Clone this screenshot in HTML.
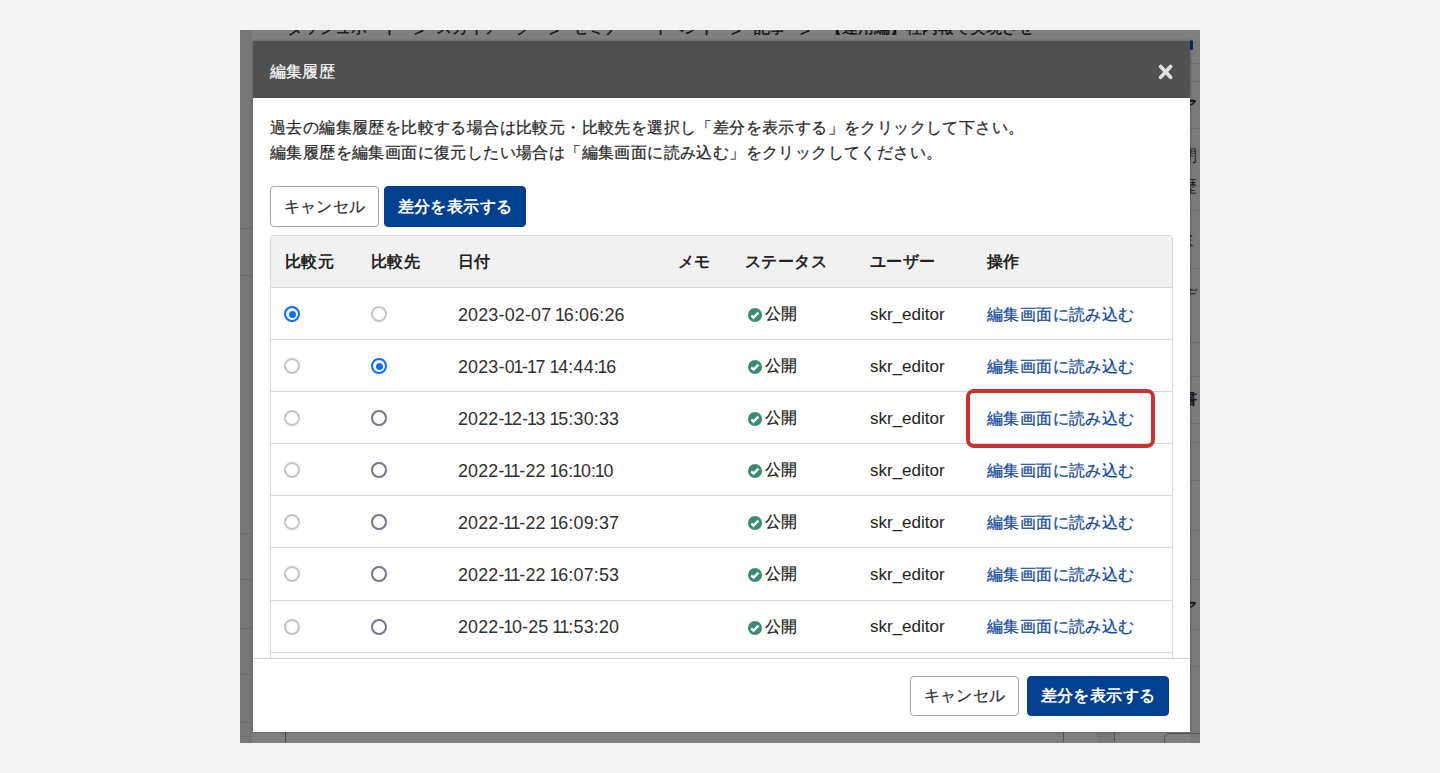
<!DOCTYPE html>
<html lang="ja">
<head>
<meta charset="utf-8">
<style>
*{box-sizing:border-box;margin:0;padding:0}
html,body{width:1440px;height:773px;overflow:hidden;background:#f3f3f3;font-family:"Liberation Sans",sans-serif;color:#333}
#screen{position:absolute;left:240px;top:30px;width:960px;height:713px;overflow:hidden;background:#7f7f7f}
#bgpage{position:absolute;left:0;top:0;width:960px;height:712px}
.crumb{position:absolute;top:-12px;font-size:16px;color:#111;white-space:nowrap;-webkit-text-stroke:0.3px #111}
#modal{position:absolute;left:13px;top:11px;width:937px;height:691px;background:#fff;box-shadow:0 0 3px rgba(0,0,0,.35)}
#mhead{position:absolute;left:0;top:0;width:937px;height:57px;background:#505050;color:#fff}
#mhead .title{position:absolute;left:17px;top:20px;font-size:16.4px;line-height:20px;letter-spacing:0.2px;-webkit-text-stroke:0.2px #fff}
#mhead svg{position:absolute;left:905px;top:23px}
.intro{position:absolute;left:17px;top:75px;font-size:16px;line-height:24.5px;color:#2a2a2a;letter-spacing:0.4px;white-space:nowrap;-webkit-text-stroke:0.25px #2a2a2a}
.btn{position:absolute;height:41px;border-radius:4px;font-size:16px;line-height:39px;text-align:center;letter-spacing:0.4px;white-space:nowrap}
.btn.c{background:#fff;border:1px solid #a3a3a3;color:#333;-webkit-text-stroke:0.25px #333}
.btn.p{background:#00408f;border:1px solid #00408f;color:#fff;font-weight:bold}
#tablewrap{position:absolute;left:17px;top:194px;width:903px;height:423px;overflow:hidden}
#table{position:absolute;left:0;top:0;width:903px;border:1px solid #d6d6d6;border-radius:3px;background:#fff}
.row{position:relative;height:52.1px;border-top:1px solid #d6d6d6}
.row.h{background:#f1f1f1;height:51px;border-top:none;border-radius:3px 3px 0 0}
.row.h2{border-top:1px solid #cfcfcf}
.cell{position:absolute;top:0;height:51px;line-height:51px;font-size:16px;white-space:nowrap}
.h .cell{font-weight:bold;color:#222;letter-spacing:0.4px;line-height:51px}
.radio{position:absolute;top:18px;width:16px;height:16px;border-radius:50%;border:2px solid #c4c4ca}
.radio.dk{border-color:#75758a}
.radio.on{border-color:#0a6dff}
.radio.on::after{content:"";position:absolute;left:2.5px;top:2.5px;width:7px;height:7px;border-radius:50%;background:#0a6dff}
.date{font-size:17.85px;color:#303030;top:1.5px;letter-spacing:0.2px}
.o{margin-left:-1.4px;margin-right:-1.4px}
.user{font-size:17px;color:#222;top:0.5px}
.stat{color:#222;letter-spacing:0.4px;-webkit-text-stroke:0.25px #222}
.link{color:#134a98;letter-spacing:0.4px;-webkit-text-stroke:0.25px #134a98;top:0.5px}
.chk{position:absolute;left:0;top:20px}
#foot{position:absolute;left:0;top:617px;width:937px;height:74px;border-top:1px solid #cfcfcf;background:#fff}
#redbox{position:absolute;left:713px;top:348px;width:189px;height:59px;border:4px solid #c93232;border-radius:8px}
</style>
</head>
<body>
<div id="screen">
  <div id="bgpage">
    <div style="position:absolute;left:0;top:0;width:12px;height:713px;background:#777"></div><div style="position:absolute;left:950px;top:11px;width:10px;height:702px;background:#7a7a7a"></div>
    <div class="crumb" style="left:47px">ダッシュボード</div><div class="crumb" style="left:174px;top:-9px;font-size:17px">&gt;</div><div class="crumb" style="left:196px">スカイアーク</div><div class="crumb" style="left:309px;top:-9px;font-size:17px">&gt;</div><div class="crumb" style="left:332px">セミナー・イベント</div><div class="crumb" style="left:491px;top:-9px;font-size:17px">&gt;</div><div class="crumb" style="left:514px">記事</div><div class="crumb" style="left:560px;top:-9px;font-size:17px">&gt;</div><div class="crumb" style="left:586px">【運用編】社内報で実現させ</div>
    <div style="position:absolute;left:0;top:198px;width:12px;height:1px;background:#6c6c6c"></div>
<div style="position:absolute;left:0;top:245px;width:12px;height:1px;background:#6c6c6c"></div>
<div style="position:absolute;left:0;top:503px;width:12px;height:1px;background:#6c6c6c"></div>
<div style="position:absolute;left:0;top:549px;width:12px;height:1px;background:#6c6c6c"></div>
<div style="position:absolute;left:0;top:598px;width:12px;height:1px;background:#6c6c6c"></div>
<div style="position:absolute;left:0;top:644px;width:12px;height:1px;background:#6c6c6c"></div>
<div style="position:absolute;left:0;top:692px;width:12px;height:1px;background:#6c6c6c"></div>
<div style="position:absolute;left:950px;top:33px;width:10px;height:1px;background:#6c6c6c"></div>
<div style="position:absolute;left:950px;top:51px;width:10px;height:1px;background:#6c6c6c"></div>
<div style="position:absolute;left:950px;top:98px;width:10px;height:1px;background:#6c6c6c"></div>
<div style="position:absolute;left:950px;top:180px;width:10px;height:1px;background:#6c6c6c"></div>
<div style="position:absolute;left:950px;top:238px;width:10px;height:1px;background:#6c6c6c"></div>
<div style="position:absolute;left:950px;top:312px;width:10px;height:1px;background:#6c6c6c"></div>
<div style="position:absolute;left:950px;top:346px;width:10px;height:1px;background:#6c6c6c"></div>
<div style="position:absolute;left:950px;top:393px;width:10px;height:1px;background:#6c6c6c"></div>
<div style="position:absolute;left:950px;top:412px;width:10px;height:1px;background:#6c6c6c"></div>
<div style="position:absolute;left:950px;top:450px;width:10px;height:1px;background:#6c6c6c"></div>
<div style="position:absolute;left:950px;top:500px;width:10px;height:1px;background:#6c6c6c"></div>
<div style="position:absolute;left:950px;top:549px;width:10px;height:1px;background:#6c6c6c"></div>
<div style="position:absolute;left:950px;top:599px;width:10px;height:1px;background:#6c6c6c"></div>
<div style="position:absolute;left:950px;top:636px;width:10px;height:1px;background:#6c6c6c"></div>
<div style="position:absolute;left:857px;top:701px;width:17px;height:11px;background:#797979"></div>
<div style="position:absolute;left:823px;top:701px;width:1px;height:11px;background:#555"></div>
<div style="position:absolute;left:874px;top:701px;width:1px;height:11px;background:#555"></div>
<div style="position:absolute;left:924px;top:703px;width:60px;height:30px;border:1px solid #555;border-radius:5px"></div>
<div style="position:absolute;left:45px;top:701px;width:1px;height:11px;background:#4a4a4a"></div>
<div style="position:absolute;left:950px;top:10px;width:3px;height:10px;border-radius:1.5px;background:#05285c"></div>
<div style="position:absolute;left:941px;top:66px;font-size:16px;line-height:20px;font-weight:bold;color:#1a1a1a">ア</div>
<div style="position:absolute;left:941px;top:116px;font-size:16px;line-height:20px;font-weight:normal;color:#1a1a1a">閉</div>
<div style="position:absolute;left:941px;top:147px;font-size:16px;line-height:20px;font-weight:normal;color:#1a1a1a">歴</div>
<div style="position:absolute;left:941px;top:200px;font-size:16px;line-height:20px;font-weight:normal;color:#1a1a1a">ミ</div>
<div style="position:absolute;left:941px;top:255px;font-size:16px;line-height:20px;font-weight:normal;color:#1a1a1a">デ</div>
<div style="position:absolute;left:941px;top:359px;font-size:16px;line-height:20px;font-weight:bold;color:#1a1a1a">書</div>
<div style="position:absolute;left:941px;top:568px;font-size:16px;line-height:20px;font-weight:bold;color:#1a1a1a">ア</div>
  </div>
  <div id="modal">
    <div id="mhead">
      <div class="title">編集履歴</div>
      <svg width="16" height="17" viewBox="0 0 16 17"><path d="M2.7 2.5 L12.6 13.3 M12.6 2.5 L2.7 13.3" stroke="#e0e0e0" stroke-width="3.7" stroke-linecap="round"/></svg>
    </div>
    <div class="intro">過去の編集履歴を比較する場合は比較元・比較先を選択し「差分を表示する」をクリックして下さい。<br>編集履歴を編集画面に復元したい場合は「編集画面に読み込む」をクリックしてください。</div>
    <div class="btn c" style="left:17px;top:145px;width:109px">キャンセル</div>
    <div class="btn p" style="left:131px;top:145px;width:142px">差分を表示する</div>
    <div id="tablewrap">
      <div id="table">
        <div class="row h">
          <div class="cell" style="left:14px">比較元</div>
          <div class="cell" style="left:100px">比較先</div>
          <div class="cell" style="left:187px">日付</div>
          <div class="cell" style="left:407px">メモ</div>
          <div class="cell" style="left:474px">ステータス</div>
          <div class="cell" style="left:599px">ユーザー</div>
          <div class="cell" style="left:716px">操作</div>
        </div>
        <div class="row">
<div class="radio on" style="left:13px"></div>
<div class="radio lt" style="left:100px"></div>
<div class="cell date" style="left:187px">2023-02-07 <span class="o">1</span>6:06:26</div>
<div class="cell stat" style="left:477px"><svg class="chk" width="14" height="14" viewBox="0 0 14 14"><circle cx="7" cy="7" r="7" fill="#3a8a76"/><path d="M3.2 7.5 L5.6 9.6 L10.5 4.6" fill="none" stroke="#fff" stroke-width="2.4" stroke-linecap="butt" stroke-linejoin="miter"/></svg><span style="margin-left:17px">公開</span></div>
<div class="cell user" style="left:599px">skr_editor</div>
<div class="cell link" style="left:716px">編集画面に読み込む</div>
</div>
<div class="row">
<div class="radio lt" style="left:13px"></div>
<div class="radio on" style="left:100px"></div>
<div class="cell date" style="left:187px">2023-0<span class="o">1</span>-<span class="o">1</span>7 <span class="o">1</span>4:44:<span class="o">1</span>6</div>
<div class="cell stat" style="left:477px"><svg class="chk" width="14" height="14" viewBox="0 0 14 14"><circle cx="7" cy="7" r="7" fill="#3a8a76"/><path d="M3.2 7.5 L5.6 9.6 L10.5 4.6" fill="none" stroke="#fff" stroke-width="2.4" stroke-linecap="butt" stroke-linejoin="miter"/></svg><span style="margin-left:17px">公開</span></div>
<div class="cell user" style="left:599px">skr_editor</div>
<div class="cell link" style="left:716px">編集画面に読み込む</div>
</div>
<div class="row">
<div class="radio lt" style="left:13px"></div>
<div class="radio dk" style="left:100px"></div>
<div class="cell date" style="left:187px">2022-<span class="o">1</span>2-<span class="o">1</span>3 <span class="o">1</span>5:30:33</div>
<div class="cell stat" style="left:477px"><svg class="chk" width="14" height="14" viewBox="0 0 14 14"><circle cx="7" cy="7" r="7" fill="#3a8a76"/><path d="M3.2 7.5 L5.6 9.6 L10.5 4.6" fill="none" stroke="#fff" stroke-width="2.4" stroke-linecap="butt" stroke-linejoin="miter"/></svg><span style="margin-left:17px">公開</span></div>
<div class="cell user" style="left:599px">skr_editor</div>
<div class="cell link" style="left:716px">編集画面に読み込む</div>
</div>
<div class="row">
<div class="radio lt" style="left:13px"></div>
<div class="radio dk" style="left:100px"></div>
<div class="cell date" style="left:187px">2022-<span class="o">1</span><span class="o">1</span>-22 <span class="o">1</span>6:<span class="o">1</span>0:<span class="o">1</span>0</div>
<div class="cell stat" style="left:477px"><svg class="chk" width="14" height="14" viewBox="0 0 14 14"><circle cx="7" cy="7" r="7" fill="#3a8a76"/><path d="M3.2 7.5 L5.6 9.6 L10.5 4.6" fill="none" stroke="#fff" stroke-width="2.4" stroke-linecap="butt" stroke-linejoin="miter"/></svg><span style="margin-left:17px">公開</span></div>
<div class="cell user" style="left:599px">skr_editor</div>
<div class="cell link" style="left:716px">編集画面に読み込む</div>
</div>
<div class="row">
<div class="radio lt" style="left:13px"></div>
<div class="radio dk" style="left:100px"></div>
<div class="cell date" style="left:187px">2022-<span class="o">1</span><span class="o">1</span>-22 <span class="o">1</span>6:09:37</div>
<div class="cell stat" style="left:477px"><svg class="chk" width="14" height="14" viewBox="0 0 14 14"><circle cx="7" cy="7" r="7" fill="#3a8a76"/><path d="M3.2 7.5 L5.6 9.6 L10.5 4.6" fill="none" stroke="#fff" stroke-width="2.4" stroke-linecap="butt" stroke-linejoin="miter"/></svg><span style="margin-left:17px">公開</span></div>
<div class="cell user" style="left:599px">skr_editor</div>
<div class="cell link" style="left:716px">編集画面に読み込む</div>
</div>
<div class="row">
<div class="radio lt" style="left:13px"></div>
<div class="radio dk" style="left:100px"></div>
<div class="cell date" style="left:187px">2022-<span class="o">1</span><span class="o">1</span>-22 <span class="o">1</span>6:07:53</div>
<div class="cell stat" style="left:477px"><svg class="chk" width="14" height="14" viewBox="0 0 14 14"><circle cx="7" cy="7" r="7" fill="#3a8a76"/><path d="M3.2 7.5 L5.6 9.6 L10.5 4.6" fill="none" stroke="#fff" stroke-width="2.4" stroke-linecap="butt" stroke-linejoin="miter"/></svg><span style="margin-left:17px">公開</span></div>
<div class="cell user" style="left:599px">skr_editor</div>
<div class="cell link" style="left:716px">編集画面に読み込む</div>
</div>
<div class="row">
<div class="radio lt" style="left:13px"></div>
<div class="radio dk" style="left:100px"></div>
<div class="cell date" style="left:187px">2022-<span class="o">1</span>0-25 <span class="o">1</span><span class="o">1</span>:53:20</div>
<div class="cell stat" style="left:477px"><svg class="chk" width="14" height="14" viewBox="0 0 14 14"><circle cx="7" cy="7" r="7" fill="#3a8a76"/><path d="M3.2 7.5 L5.6 9.6 L10.5 4.6" fill="none" stroke="#fff" stroke-width="2.4" stroke-linecap="butt" stroke-linejoin="miter"/></svg><span style="margin-left:17px">公開</span></div>
<div class="cell user" style="left:599px">skr_editor</div>
<div class="cell link" style="left:716px">編集画面に読み込む</div>
</div>
<div class="row">
<div class="radio lt" style="left:13px"></div>
<div class="radio dk" style="left:100px"></div>
<div class="cell date" style="left:187px">2022-<span class="o">1</span>0-<span class="o">1</span>8 <span class="o">1</span>0:<span class="o">1</span>2:05</div>
<div class="cell stat" style="left:477px"><svg class="chk" width="14" height="14" viewBox="0 0 14 14"><circle cx="7" cy="7" r="7" fill="#3a8a76"/><path d="M3.2 7.5 L5.6 9.6 L10.5 4.6" fill="none" stroke="#fff" stroke-width="2.4" stroke-linecap="butt" stroke-linejoin="miter"/></svg><span style="margin-left:17px">公開</span></div>
<div class="cell user" style="left:599px">skr_editor</div>
<div class="cell link" style="left:716px">編集画面に読み込む</div>
</div>
      </div>
    </div>
    <div id="foot">
      <div class="btn c" style="left:657px;top:17px;width:109px;height:40px;line-height:38px">キャンセル</div>
      <div class="btn p" style="left:774px;top:17px;width:142px;height:40px;line-height:38px">差分を表示する</div>
    </div>
    <div id="redbox"></div>
  </div>
</div>
</body>
</html>
